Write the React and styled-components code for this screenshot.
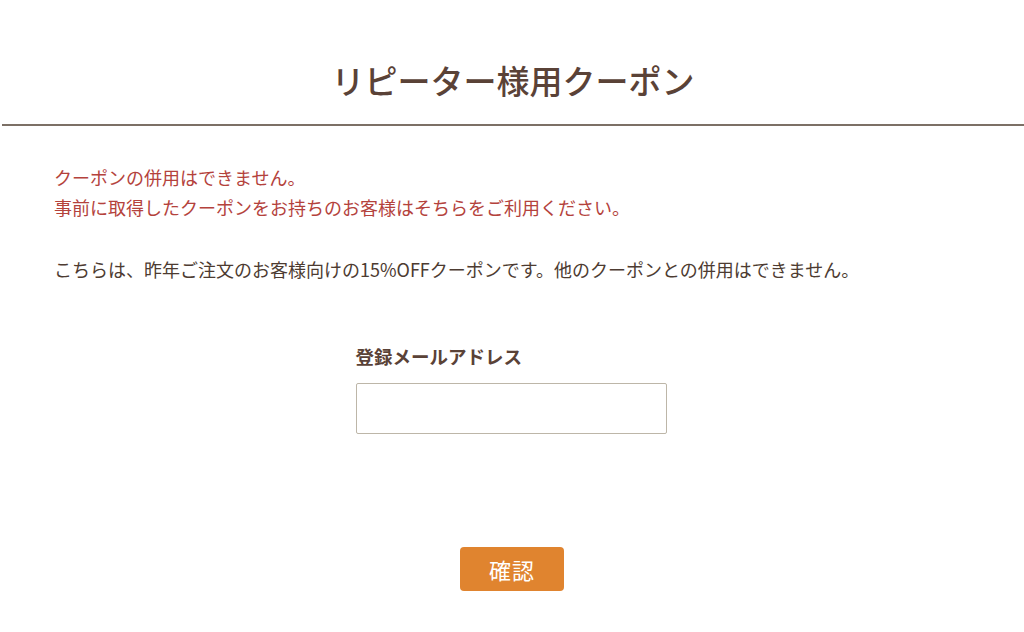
import React from 'react';
import styled, { createGlobalStyle } from 'styled-components';

const GlobalStyle = createGlobalStyle`
  html, body {
    margin: 0;
    padding: 0;
    background: #fff;
    font-family: "Noto Sans CJK JP", "Noto Sans", sans-serif;
  }
`;

const Header = styled.header`
  height: 126px;
  margin-left: 2px;
  border-bottom: 2px solid #7c7066;
  display: flex;
  align-items: center;
  justify-content: center;
  box-sizing: border-box;
  padding-top: 56px;
  padding-bottom: 20px;
`;

const Title = styled.h1`
  margin: 0;
  font-size: 33px;
  font-weight: 500;
  color: #5a4237;
  line-height: 1;
`;

const Main = styled.main`
  padding: 36px 54px 0;
`;

const Notice = styled.p`
  margin: 0;
  font-size: 18px;
  line-height: 30px;
  color: #b4423c;
`;

const Description = styled.p`
  margin: 32px 0 0;
  font-size: 18px;
  line-height: 30px;
  color: #4d3b31;
`;

const Form = styled.form`
  display: flex;
  flex-direction: column;
  align-items: center;
  margin-top: 58px;
`;

const Field = styled.div`
  display: flex;
  flex-direction: column;
  gap: 13px;
  width: 311px;
  margin-right: 2px;
`;

const Label = styled.label`
  font-size: 18.5px;
  font-weight: 700;
  color: #5a4237;
  line-height: 28px;
`;

const Input = styled.input`
  box-sizing: border-box;
  width: 311px;
  height: 51px;
  border: 1.5px solid #bdb6a8;
  border-radius: 2px;
  padding: 0 12px;
  font-size: 16px;
  outline: none;
`;

const Button = styled.button`
  margin-top: 113px;
  width: 104px;
  height: 44px;
  border: none;
  border-radius: 4px;
  background: #e0842f;
  color: #fff;
  font-family: inherit;
  font-size: 22px;
  letter-spacing: 1px;
  cursor: pointer;
`;

const App = () => {
  return (
    <>
      <GlobalStyle />
      <Header>
        <Title>リピーター様用クーポン</Title>
      </Header>
      <Main>
        <Notice>
          クーポンの併用はできません。
          <br />
          事前に取得したクーポンをお持ちのお客様はそちらをご利用ください。
        </Notice>
        <Description>
          こちらは、昨年ご注文のお客様向けの15%OFFクーポンです。他のクーポンとの併用はできません。
        </Description>
        <Form onSubmit={(e) => e.preventDefault()}>
          <Field>
            <Label htmlFor="email">登録メールアドレス</Label>
            <Input id="email" type="email" />
          </Field>
          <Button type="submit">確認</Button>
        </Form>
      </Main>
    </>
  );
};

export default App;
